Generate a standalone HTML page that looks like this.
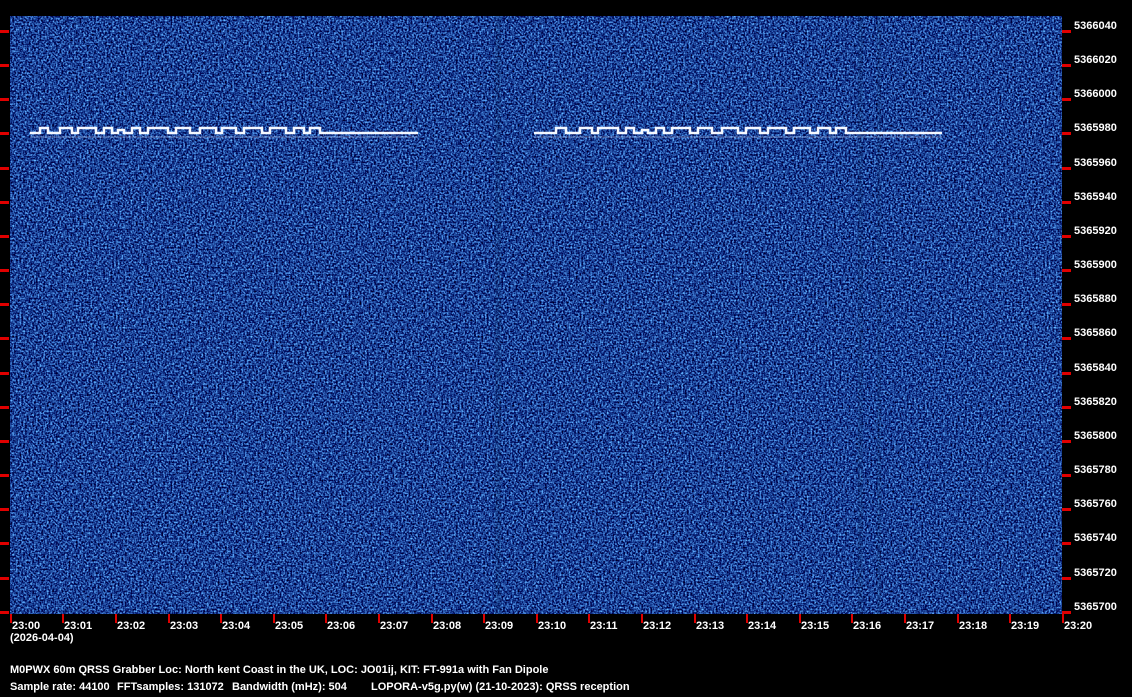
<!DOCTYPE html>
<html><head><meta charset="utf-8"><style>
html,body{margin:0;padding:0;background:#000;width:1132px;height:697px;overflow:hidden}
svg{position:absolute;left:0;top:0}
text{font-family:"Liberation Sans",sans-serif;font-weight:bold;font-size:11px;fill:#fff}
</style></head><body>
<svg width="1132" height="697" viewBox="0 0 1132 697">
<defs>
<filter id="n" x="0" y="0" width="100%" height="100%" color-interpolation-filters="sRGB">
<feTurbulence type="fractalNoise" baseFrequency="0.55" numOctaves="2" seed="3"/>
<feColorMatrix type="matrix" values="1.0 0 0 0 -0.4  1.6 0 0 0 -0.55  1.6 0 0 0 -0.22  0 0 0 0 1"/>
</filter>
</defs>
<rect x="0" y="0" width="1132" height="697" fill="#000"/>
<rect x="10" y="16" width="1052" height="598" fill="#1b4a8c"/>
<rect x="10" y="16" width="1052" height="598" filter="url(#n)"/>
<rect x="495" y="16" width="6" height="598" fill="#0c2d66" opacity="0.2"/>
<rect x="858" y="16" width="5" height="598" fill="#0c2d66" opacity="0.2"/>
<rect x="877" y="16" width="4" height="598" fill="#0c2d66" opacity="0.2"/>
<g stroke="#f4f8ff" stroke-width="2.5" fill="none">
<path d="M30 133H40V128H48V133H60V128H72V133H78V128H96V133H104V128H112V133H118V130H124V133H132V128H140V133H148V128H168V133H176V128H190V133H200V128H216V133H222V128H236V133H244V128H262V133H270V128H286V133H294V128H304V133H310V128H320V133H418"/>
<path d="M534 133H556V128H566V133H580V128H592V133H598V128H618V133H626V128H634V133H642V130H648V133H656V128H664V133H672V128H690V133H698V128H712V133H722V128H738V133H746V128H760V133H768V128H786V133H794V128H810V133H818V128H830V133H836V128H846V133H942"/>
</g>
<g stroke="#cfe0ff" stroke-width="1" opacity="0.5" fill="none">
<path d="M30 137H418M534 137H942"/>
</g>
<g fill="#e00000">
<rect x="0" y="30" width="9" height="3"/><rect x="1062" y="30" width="9" height="3"/>
<rect x="0" y="64" width="9" height="3"/><rect x="1062" y="64" width="9" height="3"/>
<rect x="0" y="98" width="9" height="3"/><rect x="1062" y="98" width="9" height="3"/>
<rect x="0" y="132" width="9" height="3"/><rect x="1062" y="132" width="9" height="3"/>
<rect x="0" y="167" width="9" height="3"/><rect x="1062" y="167" width="9" height="3"/>
<rect x="0" y="201" width="9" height="3"/><rect x="1062" y="201" width="9" height="3"/>
<rect x="0" y="235" width="9" height="3"/><rect x="1062" y="235" width="9" height="3"/>
<rect x="0" y="269" width="9" height="3"/><rect x="1062" y="269" width="9" height="3"/>
<rect x="0" y="303" width="9" height="3"/><rect x="1062" y="303" width="9" height="3"/>
<rect x="0" y="337" width="9" height="3"/><rect x="1062" y="337" width="9" height="3"/>
<rect x="0" y="372" width="9" height="3"/><rect x="1062" y="372" width="9" height="3"/>
<rect x="0" y="406" width="9" height="3"/><rect x="1062" y="406" width="9" height="3"/>
<rect x="0" y="440" width="9" height="3"/><rect x="1062" y="440" width="9" height="3"/>
<rect x="0" y="474" width="9" height="3"/><rect x="1062" y="474" width="9" height="3"/>
<rect x="0" y="508" width="9" height="3"/><rect x="1062" y="508" width="9" height="3"/>
<rect x="0" y="542" width="9" height="3"/><rect x="1062" y="542" width="9" height="3"/>
<rect x="0" y="577" width="9" height="3"/><rect x="1062" y="577" width="9" height="3"/>
<rect x="0" y="611" width="9" height="3"/><rect x="1062" y="611" width="9" height="3"/>
</g>
<g>
<text x="1074" y="29">5366040</text><text x="1074" y="63">5366020</text><text x="1074" y="97">5366000</text><text x="1074" y="131">5365980</text>
<text x="1074" y="166">5365960</text><text x="1074" y="200">5365940</text><text x="1074" y="234">5365920</text><text x="1074" y="268">5365900</text>
<text x="1074" y="302">5365880</text><text x="1074" y="336">5365860</text><text x="1074" y="371">5365840</text><text x="1074" y="405">5365820</text>
<text x="1074" y="439">5365800</text><text x="1074" y="473">5365780</text><text x="1074" y="507">5365760</text><text x="1074" y="541">5365740</text>
<text x="1074" y="576">5365720</text><text x="1074" y="610">5365700</text>
</g>
<g fill="#e00000">
<rect x="10" y="614" width="2" height="9"/><rect x="62" y="614" width="2" height="9"/><rect x="115" y="614" width="2" height="9"/>
<rect x="168" y="614" width="2" height="9"/><rect x="220" y="614" width="2" height="9"/><rect x="273" y="614" width="2" height="9"/>
<rect x="325" y="614" width="2" height="9"/><rect x="378" y="614" width="2" height="9"/><rect x="431" y="614" width="2" height="9"/>
<rect x="483" y="614" width="2" height="9"/><rect x="536" y="614" width="2" height="9"/><rect x="588" y="614" width="2" height="9"/>
<rect x="641" y="614" width="2" height="9"/><rect x="694" y="614" width="2" height="9"/><rect x="746" y="614" width="2" height="9"/>
<rect x="799" y="614" width="2" height="9"/><rect x="851" y="614" width="2" height="9"/><rect x="904" y="614" width="2" height="9"/>
<rect x="957" y="614" width="2" height="9"/><rect x="1009" y="614" width="2" height="9"/><rect x="1062" y="614" width="2" height="9"/>
</g>
<g>
<text x="12" y="629">23:00</text><text x="64" y="629">23:01</text><text x="117" y="629">23:02</text><text x="170" y="629">23:03</text>
<text x="222" y="629">23:04</text><text x="275" y="629">23:05</text><text x="327" y="629">23:06</text><text x="380" y="629">23:07</text>
<text x="433" y="629">23:08</text><text x="485" y="629">23:09</text><text x="538" y="629">23:10</text><text x="590" y="629">23:11</text>
<text x="643" y="629">23:12</text><text x="696" y="629">23:13</text><text x="748" y="629">23:14</text><text x="801" y="629">23:15</text>
<text x="853" y="629">23:16</text><text x="906" y="629">23:17</text><text x="959" y="629">23:18</text><text x="1011" y="629">23:19</text>
<text x="1064" y="629">23:20</text>
<text x="10" y="641">(2026-04-04)</text>
<text x="10" y="673">M0PWX 60m QRSS Grabber Loc: North kent Coast in the UK, LOC: JO01ij, KIT: FT-991a with Fan Dipole</text>
<text x="10" y="690">Sample rate: 44100</text>
<text x="117" y="690">FFTsamples: 131072</text>
<text x="232" y="690">Bandwidth (mHz): 504</text>
<text x="371" y="690">LOPORA-v5g.py(w) (21-10-2023): QRSS reception</text>
</g>
</svg>
</body></html>
